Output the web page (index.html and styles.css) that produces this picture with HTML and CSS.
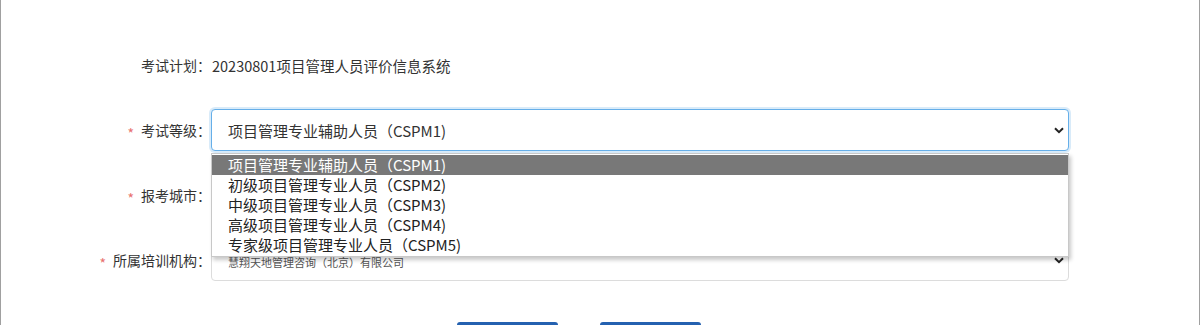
FILE: index.html
```html
<!DOCTYPE html>
<html lang="zh-CN">
<head>
    <meta charset="UTF-8">
    <meta name="viewport" content="width=device-width, initial-scale=1.0">
    <title>报名信息</title>
    <link rel="stylesheet" href="styles.css">
</head>
<body>
    <div class="page">
        <div class="form">
            <div class="row">
                <div class="label">考试计划：</div>
                <div class="value">20230801项目管理人员评价信息系统</div>
            </div>

            <div class="row">
                <div class="label"><span class="req">*</span>考试等级：</div>
                <div class="select select-focus">
                    <span class="select-text">项目管理专业辅助人员（CSPM1)</span>
                    <svg class="arrow" width="10" height="7" viewBox="0 0 10 7"><path d="M1 1.2 L5 5.2 L9 1.2" fill="none" stroke="#222" stroke-width="2"/></svg>
                    <ul class="options">
                        <li class="option-active">项目管理专业辅助人员（CSPM1)</li>
                        <li>初级项目管理专业人员（CSPM2)</li>
                        <li>中级项目管理专业人员（CSPM3)</li>
                        <li>高级项目管理专业人员（CSPM4)</li>
                        <li>专家级项目管理专业人员（CSPM5)</li>
                    </ul>
                </div>
            </div>

            <div class="row">
                <div class="label"><span class="req">*</span>报考城市：</div>
                <div class="select">
                    <span class="select-text"></span>
                    <svg class="arrow" width="10" height="7" viewBox="0 0 10 7"><path d="M1 1.2 L5 5.2 L9 1.2" fill="none" stroke="#222" stroke-width="2"/></svg>
                </div>
            </div>

            <div class="row">
                <div class="label"><span class="req">*</span>所属培训机构：</div>
                <div class="select">
                    <span class="select-text select-small">慧翔天地管理咨询（北京）有限公司</span>
                    <svg class="arrow" width="10" height="7" viewBox="0 0 10 7"><path d="M1 1.2 L5 5.2 L9 1.2" fill="none" stroke="#222" stroke-width="2"/></svg>
                </div>
            </div>

            <div class="buttons">
                <div class="btn"></div>
                <div class="btn"></div>
            </div>
        </div>
    </div>
</body>
</html>
```

FILE: styles.css
```css
body{
    margin: 0;
    font-family: "Noto Sans CJK SC", "Liberation Sans", sans-serif;
    color: #333;
    background-color: white;
}
.page{
    width: 1198px;
    height: 325px;
    border-left: 1px solid #a0a0a0;
    border-right: 1px solid #a0a0a0;
    overflow: hidden;
}
.form{
    padding-top: 44px;
}
.row{
    display: flex;
    align-items: center;
    height: 42px;
    margin-bottom: 23px;
}
.label{
    width: 210px;
    text-align: right;
    font-size: 14px;
    color: #333;
    white-space: nowrap;
}
.req{
    color: #e8706e;
    margin-right: 7px;
    position: relative;
    top: 3px;
}
.value{
    font-size: 14.5px;
    color: #333;
    padding-left: 1px;
}
.select{
    position: relative;
    width: 858px;
    height: 42px;
    box-sizing: border-box;
    border: 1px solid #dcdcdc;
    border-radius: 4px;
    display: flex;
    align-items: center;
    justify-content: space-between;
    padding: 0 4px 0 16px;
    background-color: white;
}
.select-focus{
    border-color: #66afe9;
    box-shadow: 0 0 0 2px rgba(102, 175, 233, 0.25);
}
.select-text{
    font-size: 15px;
    color: #333;
}
.select-small{
    font-size: 11px;
    color: #555;
    padding-top: 3px;
}
.arrow{
    display: block;
}
.options{
    position: absolute;
    top: 43px;
    left: -1px;
    width: 858px;
    box-sizing: border-box;
    margin: 0;
    padding: 1px 0;
    list-style: none;
    background-color: white;
    border: 1px solid #c8c8c8;
    box-shadow: 2px 3px 4px rgba(0, 0, 0, 0.22);
    z-index: 2;
}
.options li{
    height: 20px;
    line-height: 20px;
    font-size: 15px;
    color: #222;
    padding-left: 16px;
    white-space: nowrap;
}
.options .option-active{
    background-color: #787878;
    color: white;
}
.buttons{
    display: flex;
    gap: 42px;
    padding-left: 456px;
    margin-top: 41px;
}
.btn{
    width: 101px;
    height: 36px;
    background-color: #2461b0;
    border-radius: 3px;
}
```
